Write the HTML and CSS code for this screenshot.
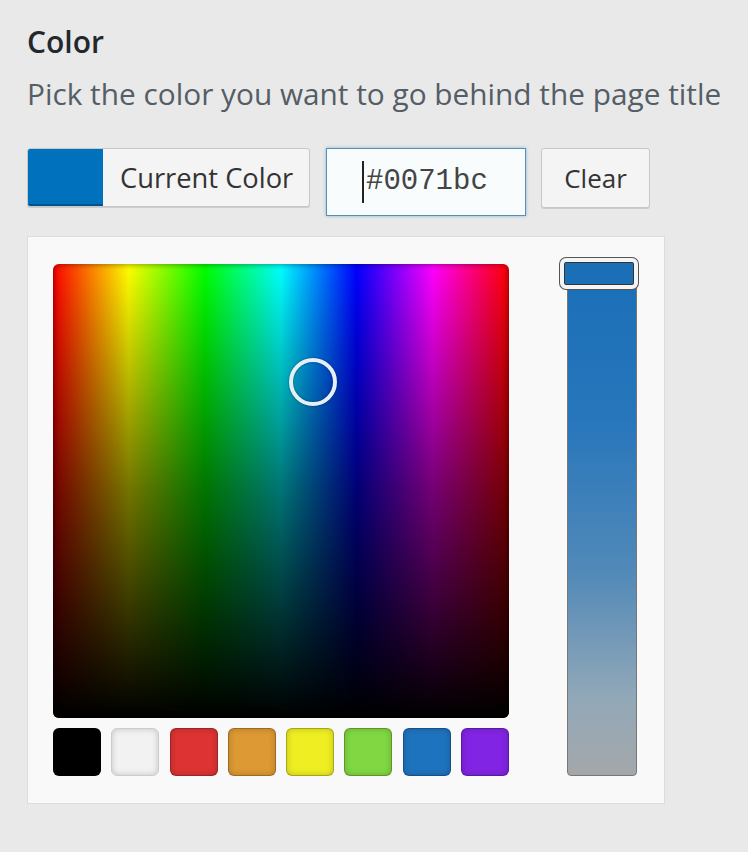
FILE: index.html
```html
<!DOCTYPE html>
<html lang="en">
<head>
    <meta charset="UTF-8">
    <meta name="viewport" content="width=device-width, initial-scale=1.0">
    <title>Color</title>
    <link rel="stylesheet" href="styles.css">
</head>
<body>
    <div class="control">
        <h1 class="control-title">Color</h1>
        <p class="control-desc">Pick the color you want to go behind the page title</p>

        <div class="control-row">
            <button type="button" class="current-btn">
                <span class="current-swatch"></span>
                <span class="current-label">Current Color</span>
            </button>
            <div class="hex-input"><span class="caret"></span>#0071bc</div>
            <button type="button" class="clear-btn">Clear</button>
        </div>

        <div class="picker">
            <div class="picker-left">
                <div class="square">
                    <span class="square-shade"></span>
                    <span class="target"></span>
                </div>
                <div class="palette">
                    <span class="pal pal-black"></span>
                    <span class="pal pal-white"></span>
                    <span class="pal pal-red"></span>
                    <span class="pal pal-orange"></span>
                    <span class="pal pal-yellow"></span>
                    <span class="pal pal-green"></span>
                    <span class="pal pal-blue"></span>
                    <span class="pal pal-purple"></span>
                </div>
            </div>
            <div class="strip">
                <span class="strip-handle"></span>
            </div>
        </div>
    </div>
</body>
</html>
```

FILE: styles.css
```css
body {
    margin: 0;
    background-color: #e9e9e9;
    font-family: "Open Sans", "Noto Sans", sans-serif;
}
.control {
    padding: 22px 0 0 27px;
}
.control-title {
    margin: 0;
    font-size: 30px;
    font-weight: 600;
    color: #23282d;
    line-height: 40px;
}
.control-desc {
    margin: 12px 0 0;
    font-size: 29.8px;
    color: #555d66;
    line-height: 40px;
    white-space: nowrap;
}
.control-row {
    display: flex;
    align-items: flex-start;
    margin-top: 34px;
}
.current-btn {
    display: flex;
    align-items: stretch;
    width: 283px;
    height: 59px;
    padding: 0;
    border: 1px solid #c8c8c8;
    border-radius: 3px;
    background-color: #f4f4f4;
    box-shadow: 0 1px 0 #ccc;
    font-family: inherit;
    overflow: hidden;
}
.current-swatch {
    width: 75px;
    background-color: #0071bc;
    box-shadow: inset 0 -2px 0 rgba(0,0,0,0.25);
}
.current-label {
    display: flex;
    align-items: center;
    padding-left: 17px;
    font-size: 27.3px;
    color: #333;
}
.hex-input {
    position: relative;
    box-sizing: border-box;
    width: 200px;
    height: 68px;
    margin-left: 16px;
    padding: 15px 0 0 39px;
    border: 1px solid #5b8db5;
    background-color: #f8fcfd;
    box-shadow: 0 0 3px rgba(30,140,190,0.5);
    font-family: "Liberation Mono", "Courier New", monospace;
    font-size: 29px;
    color: #444;
    line-height: 36px;
}
.caret {
    position: absolute;
    left: 35px;
    top: 12px;
    width: 2px;
    height: 42px;
    background-color: #222;
}
.clear-btn {
    width: 109px;
    height: 60px;
    margin-left: 15px;
    border: 1px solid #c8c8c8;
    border-radius: 3px;
    background-color: #f4f4f4;
    box-shadow: 0 1px 0 #ccc;
    font-family: inherit;
    font-size: 26px;
    color: #333;
}
.picker {
    display: flex;
    width: 638px;
    box-sizing: border-box;
    margin-top: 20px;
    padding: 27px 0 27px 25px;
    border: 1px solid #dcdcdc;
    background-color: #f9f9f9;
}
.picker-left {
    width: 456px;
}
.square {
    position: relative;
    height: 454px;
    border-radius: 6px;
    overflow: hidden;
    background: linear-gradient(to right, #f00 0%, #ff0 16.6%, #0f0 33.3%, #0ff 50%, #00f 66.6%, #f0f 83.3%, #f00 100%);
}
.square-shade {
    position: absolute;
    inset: 0;
    background: linear-gradient(to bottom, rgba(0,0,0,0) 0%, rgba(0,0,0,0.55) 50%, #000 100%);
    box-shadow: inset 0 0 6px rgba(0,0,0,0.5);
}
.target {
    position: absolute;
    left: 236px;
    top: 94px;
    width: 40px;
    height: 40px;
    border: 4px solid #e6eef6;
    border-radius: 50%;
    box-shadow: 0 0 2px rgba(0,0,0,0.5), inset 0 0 2px rgba(0,0,0,0.5);
}
.palette {
    display: flex;
    justify-content: space-between;
    margin-top: 10px;
}
.pal {
    width: 48px;
    height: 48px;
    box-sizing: border-box;
    border-radius: 6px;
    border: 1px solid rgba(0,0,0,0.3);
    box-shadow: inset 0 0 6px rgba(0,0,0,0.2);
}
.pal-black { background-color: #000; }
.pal-white { background-color: #f2f2f2; border-color: #ccc; }
.pal-red { background-color: #dd3333; }
.pal-orange { background-color: #dd9933; }
.pal-yellow { background-color: #eeee22; }
.pal-green { background-color: #81d742; }
.pal-blue { background-color: #1e73be; }
.pal-purple { background-color: #8224e3; }
.strip {
    position: relative;
    width: 70px;
    height: 512px;
    margin: 0 0 0 58px;
    box-sizing: border-box;
    border: 1px solid #777;
    border-radius: 4px;
    background: linear-gradient(to bottom, #1a6fb6 0%, #2776bc 30%, #5189b8 60%, #92a8b8 85%, #a4a7a9 100%);
}
.strip-handle {
    position: absolute;
    left: -8px;
    top: -7px;
    width: 78px;
    height: 31px;
    box-sizing: border-box;
    border: 4px solid #f4f4f4;
    border-radius: 6px;
    background-color: #1a6fb6;
    box-shadow: 0 0 0 1px #555, inset 0 0 0 1px #333;
}
```
